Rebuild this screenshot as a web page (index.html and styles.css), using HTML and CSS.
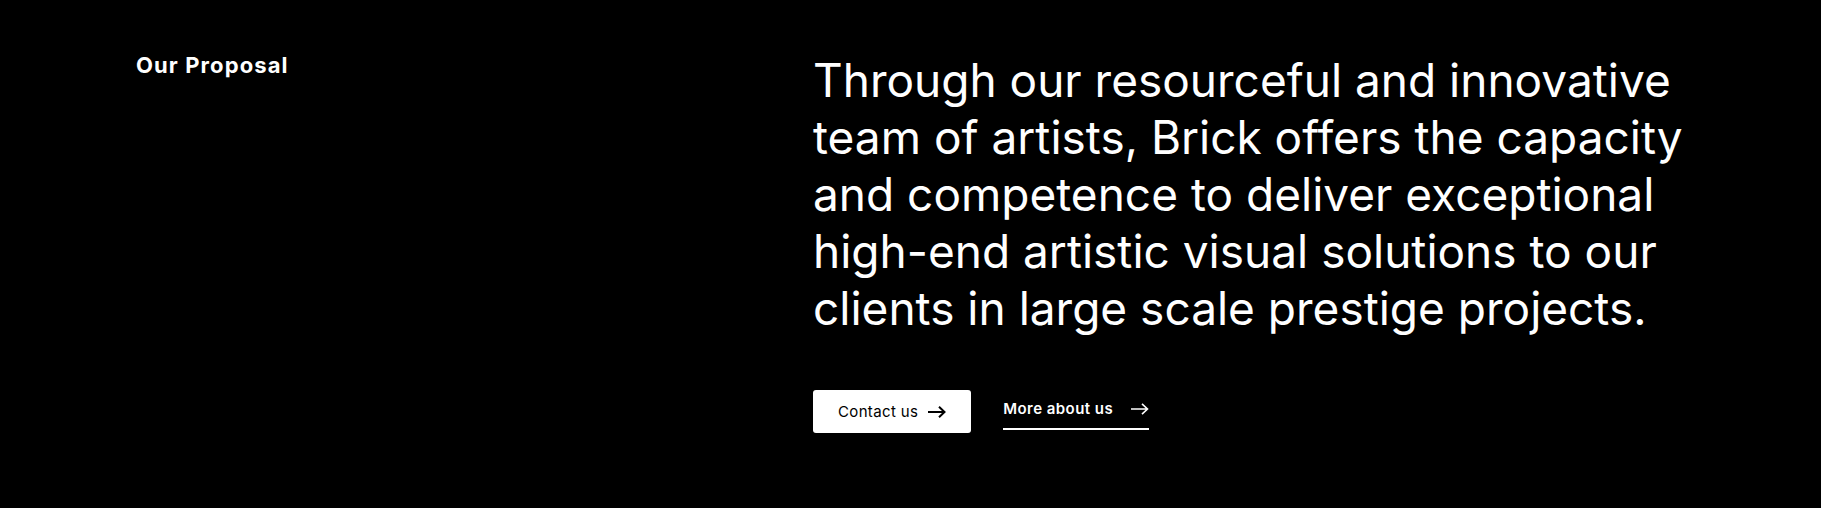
FILE: index.html
```html
<!DOCTYPE html>
<html lang="en">
<head>
<meta charset="utf-8">
<title>Our Proposal</title>
<link rel="stylesheet" href="styles.css">
</head>
<body>
<section class="proposal">
  <div class="proposal__label">Our Proposal</div>
  <div class="proposal__content">
    <h2 class="proposal__text">Through our resourceful and innovative team of artists, Brick offers the capacity and competence to deliver exceptional high-end artistic visual solutions to our clients in large scale prestige projects.</h2>
    <div class="proposal__actions">
      <a class="btn-primary" href="#">
        <span>Contact us</span>
        <svg class="arrow" width="18" height="12" viewBox="0 0 18 12" fill="none" stroke="currentColor" stroke-width="2" stroke-linecap="butt" stroke-linejoin="miter"><path d="M0 6H16.5M11 0.8L16.5 6L11 11.2"/></svg>
      </a>
      <a class="link-more" href="#">
        <span>More about us</span>
        <svg class="arrow" width="18" height="12" viewBox="0 0 18 12" fill="none" stroke="currentColor" stroke-width="1.6" stroke-linecap="butt" stroke-linejoin="miter"><path d="M0 6H16.5M11 0.8L16.5 6L11 11.2"/></svg>
      </a>
    </div>
  </div>
</section>
</body>
</html>
```
FILE: styles.css
```css
html, body {
  margin: 0;
  padding: 0;
  background: #000;
  color: #fff;
  font-family: Inter, "Open Sans", Arial, sans-serif;
}

.proposal {
  display: grid;
  grid-template-columns: 677px minmax(0, 900px);
  padding: 52px 136px 0;
  min-height: 508px;
  box-sizing: border-box;
}

.proposal__label {
  padding-top: 1px;
  font-size: 22px;
  font-weight: 700;
  line-height: 25px;
  letter-spacing: 1.1px;
}

.proposal__text {
  margin: 0;
  font-size: 46px;
  font-weight: 400;
  line-height: 57px;
  letter-spacing: 0;
}

.proposal__actions {
  display: flex;
  align-items: center;
  gap: 32px;
  margin-top: 53px;
}

.btn-primary {
  display: inline-flex;
  align-items: center;
  gap: 10px;
  height: 43px;
  padding: 0 25px;
  box-sizing: border-box;
  background: #fff;
  color: #000;
  border-radius: 3px;
  font-size: 15px;
  line-height: 20px;
  letter-spacing: 0.35px;
  text-decoration: none;
}

.link-more {
  display: inline-flex;
  align-items: center;
  gap: 18px;
  padding: 0 0 9px;
  margin-top: 6px;
  border-bottom: 2px solid #fff;
  color: #fff;
  font-size: 15px;
  font-weight: 600;
  line-height: 20px;
  letter-spacing: 0.45px;
  text-decoration: none;
}

.arrow {
  display: block;
  flex: none;
}
```
